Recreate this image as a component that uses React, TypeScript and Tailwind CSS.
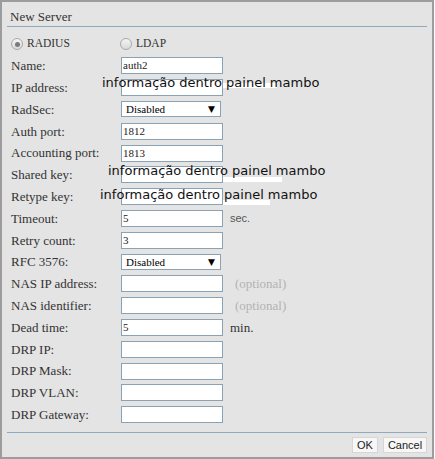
import type { ReactNode } from "react";

const serif = "font-['Liberation_Serif',serif]";

type Row = {
  label: string;
  value?: string;
  kind?: "input" | "select";
  suffix?: ReactNode;
  overlay?: { left: number; top: number; strip: [number, number, number] };
};

const rows: Row[] = [
  { label: "Name:", value: "auth2" },
  { label: "IP address:", overlay: { left: 100, top: -4, strip: [221, 275, 6] } },
  { label: "RadSec:", value: "Disabled", kind: "select" },
  { label: "Auth port:", value: "1812" },
  { label: "Accounting port:", value: "1813" },
  { label: "Shared key:", overlay: { left: 106, top: -3, strip: [221, 280, 13] } },
  { label: "Retype key:", overlay: { left: 98, top: -1, strip: [221, 268, 14] } },
  {
    label: "Timeout:",
    value: "5",
    suffix: <span className="ml-[7px] font-['Liberation_Sans',sans-serif] text-[11px] text-[#555]">sec.</span>,
  },
  { label: "Retry count:", value: "3" },
  { label: "RFC 3576:", value: "Disabled", kind: "select" },
  { label: "NAS IP address:", suffix: <span className="ml-[12px] text-[#b3b3b3]">(optional)</span> },
  { label: "NAS identifier:", suffix: <span className="ml-[12px] text-[#b3b3b3]">(optional)</span> },
  { label: "Dead time:", value: "5", suffix: <span className="ml-[7px] text-[#333]">min.</span> },
  { label: "DRP IP:" },
  { label: "DRP Mask:" },
  { label: "DRP VLAN:" },
  { label: "DRP Gateway:" },
];

function Radio({ checked, label }: { checked?: boolean; label: string }) {
  return (
    <div className="flex items-center gap-[4px]">
      <span className="flex h-[12px] w-[12px] items-center justify-center rounded-full border border-[#a9a9a9] bg-gradient-to-b from-[#f4f4f4] to-[#d9d9d9]">
        {checked && <span className="h-[5px] w-[5px] rounded-full bg-[#7a7a7a]" />}
      </span>
      <span className="text-[11.5px] text-[#333]">{label}</span>
    </div>
  );
}

function Field({ row }: { row: Row }) {
  if (row.kind === "select") {
    return (
      <div className="flex h-[16px] w-[100px] items-center justify-between border border-[#8aa2b6] bg-white pl-[4px] pr-[5px]">
        <span className="text-[11px] leading-none text-black">{row.value}</span>
        <span className="font-['DejaVu_Sans',sans-serif] text-[9px] leading-none text-black">▼</span>
      </div>
    );
  }
  return (
    <div className="flex h-[17px] w-[102px] items-center border border-[#8aa2b6] bg-white pl-[1px]">
      <span className="text-[11px] leading-none text-[#222]">{row.value}</span>
    </div>
  );
}

export default function App() {
  return (
    <div className={`${serif} h-[459px] w-[435px] bg-white`}>
      <div className="flex h-[459px] w-[434px] flex-col border-2 border-[#9c9c9c] bg-[#e4e4e4]">
        <div className="h-[24px] pl-[8px] pt-[7px] text-[13px] leading-[16px] text-[#333]">New Server</div>
        <div className="mx-[5px] h-px bg-[#8fa9bd]" />

        <div className="flex h-[28px] items-center pl-[9px] pt-[6px]">
          <div className="w-[109px]">
            <Radio checked label="RADIUS" />
          </div>
          <Radio label="LDAP" />
        </div>

        <div className="flex-1">
          {rows.map((row) => (
            <div key={row.label} className="relative flex h-[21.8px] items-center pl-[9px] text-[13px] text-[#333]">
              <span className="w-[110px] shrink-0">{row.label}</span>
              <Field row={row} />
              {row.suffix}
              {row.overlay && (
                <>
                  <span
                    className="absolute h-[5px] bg-white"
                    style={{
                      left: row.overlay.strip[0],
                      width: row.overlay.strip[1] - row.overlay.strip[0],
                      top: row.overlay.strip[2],
                    }}
                  />
                  <span
                    className="absolute whitespace-nowrap font-['DejaVu_Sans',sans-serif] text-[13px] leading-[20px] text-[#111]"
                    style={{ left: row.overlay.left, top: row.overlay.top }}
                  >
                    informação dentro painel mambo
                  </span>
                </>
              )}
            </div>
          ))}
        </div>

        <div className="mx-[5px] h-px bg-[#8fa9bd]" />
        <div className="flex h-[24px] justify-end gap-[5px] pr-[5px] pt-[4px] font-['Liberation_Sans',sans-serif] text-[11px] text-[#222]">
          <button className="h-[16px] w-[26px] border border-[#d6d6d6] bg-[#f7f7f7] leading-none">OK</button>
          <button className="h-[16px] w-[44px] border border-[#d6d6d6] bg-[#f7f7f7] leading-none">Cancel</button>
        </div>
      </div>
    </div>
  );
}
